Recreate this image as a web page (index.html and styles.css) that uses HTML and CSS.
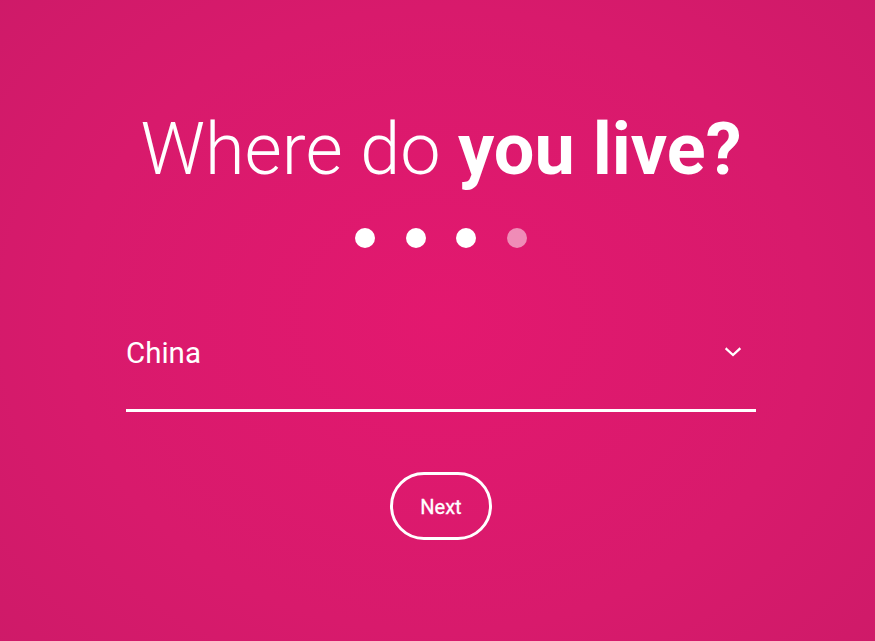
FILE: index.html
```html
<!DOCTYPE html>
<html lang="en">
<head>
<meta charset="utf-8">
<title>Where do you live?</title>
<link rel="stylesheet" href="styles.css">
</head>
<body>
<main class="page">
  <h1 class="title"><span class="light">Where do</span> <span class="bold">you live?</span></h1>
  <div class="steps">
    <span class="dot"></span>
    <span class="dot"></span>
    <span class="dot"></span>
    <span class="dot dot-pending"></span>
  </div>
  <div class="field">
    <span class="field-value">China</span>
    <svg class="chevron" viewBox="0 0 16 10" width="16" height="10" aria-hidden="true">
      <polyline points="1.5,2 8,8 14.5,2" fill="none" stroke="#fff" stroke-width="2.3" stroke-linecap="square"/>
    </svg>
  </div>
  <button class="next" type="button">Next</button>
</main>
</body>
</html>
```

FILE: styles.css
```css
html, body {
  margin: 0;
  padding: 0;
  height: 100%;
}

body {
  background: radial-gradient(ellipse 620px 520px at 441px 320px, #e3186f 0%, #d81a6c 60%, #cd1a68 100%);
  background-color: #cd1a68;
  color: #fff;
  font-family: Roboto, "Liberation Sans", Arial, sans-serif;
  overflow: hidden;
}

.page {
  display: flex;
  flex-direction: column;
  align-items: center;
  padding-left: 7px;
  min-height: 100%;
  box-sizing: border-box;
}

.title {
  margin: 107px 0 0;
  font-size: 72px;
  line-height: 86px;
  font-weight: 300;
  white-space: nowrap;
}

.title .light {
  font-weight: 300;
}

.title .bold {
  font-weight: 700;
}

.steps {
  display: flex;
  gap: 30.5px;
  margin-top: 35px;
}

.dot {
  width: 20px;
  height: 20px;
  border-radius: 50%;
  background: #fff;
}

.dot-pending {
  background: rgba(255, 255, 255, 0.5);
}

.field {
  width: 630px;
  box-sizing: border-box;
  margin-top: 87px;
  padding: 0 15px 38px 0;
  border-bottom: 3px solid #fff;
  display: flex;
  align-items: center;
  justify-content: space-between;
}

.field-value {
  font-size: 29.5px;
  line-height: 36px;
  font-weight: 400;
}

.chevron {
  display: block;
  margin-top: -3px;
}

.next {
  margin-top: 60px;
  width: 102px;
  height: 68px;
  box-sizing: border-box;
  border: 3px solid #fff;
  border-radius: 34px;
  background: transparent;
  color: #fff;
  font-family: Roboto, "Liberation Sans", Arial, sans-serif;
  font-size: 20px;
  font-weight: 400;
  -webkit-text-stroke: 0.3px #fff;
  padding: 2px 0 0;
  cursor: pointer;
}
```
